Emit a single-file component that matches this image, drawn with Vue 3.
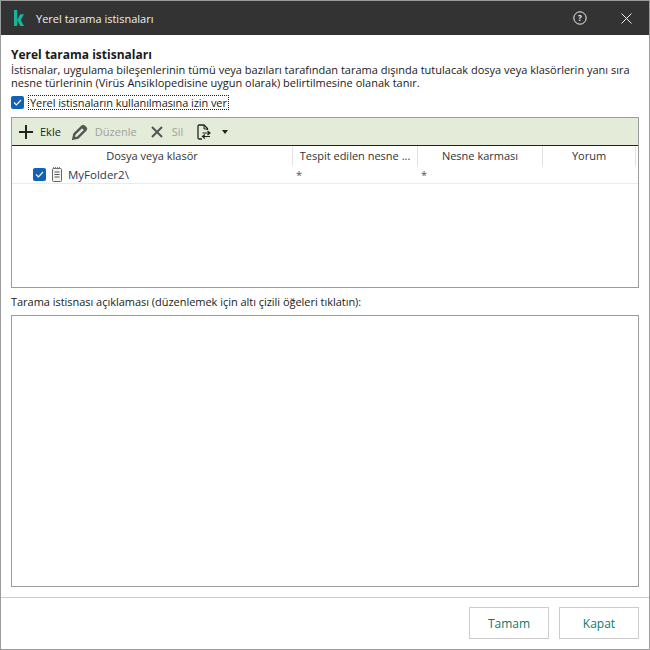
<template>
  <div class="window">
    <header class="titlebar">
      <svg class="logo" width="10" height="16" viewBox="0 0 10 16">
        <path d="M0 0h3.2v16H0zM6.2 4.2H10L6.8 10 10 16H6.2L3.2 10z" fill="#17b497" />
      </svg>
      <span class="title">Yerel tarama istisnaları</span>
      <svg class="help" width="14" height="14" viewBox="0 0 14 14">
        <circle cx="7" cy="7" r="6.2" fill="none" stroke="#eee" stroke-width="1" />
        <text x="7" y="10" text-anchor="middle" font-size="8" font-weight="700" fill="#eee" font-family="Open Sans, sans-serif">?</text>
      </svg>
      <svg class="close" width="11" height="11" viewBox="0 0 11 11">
        <path d="M.5.5l10 10M10.5.5l-10 10" stroke="#eee" stroke-width="1" fill="none" />
      </svg>
    </header>

    <main class="content">
      <h1>Yerel tarama istisnaları</h1>
      <p class="desc">İstisnalar, uygulama bileşenlerinin tümü veya bazıları tarafından tarama dışında tutulacak dosya veya klasörlerin yanı sıra nesne türlerinin (Virüs Ansiklopedisine uygun olarak) belirtilmesine olanak tanır.</p>
      <label class="allow">
        <span class="check"><svg width="9" height="7" viewBox="0 0 9 7"><path d="M1 3.5l2.4 2.4L8 1" fill="none" stroke="#fff" stroke-width="1.1" /></svg></span>
        <span class="allow-text">Yerel istisnaların kullanılmasına izin ver</span>
      </label>

      <section class="list">
        <div class="toolbar">
          <button class="tool add">
            <svg width="14" height="14" viewBox="0 0 14 14"><path d="M7 0v14M0 7h14" stroke="#222" stroke-width="2" fill="none" /></svg>
            <span>Ekle</span>
          </button>
          <button class="tool off edit">
            <svg width="16" height="16" viewBox="0 0 16 16">
              <path d="M1.4 14.6l1-4.4L10 2.6l3.4 3.4-7.6 7.6z" fill="none" stroke="#555" stroke-width="2.4" />
              <path d="M10.6 1.2a1.4 1.4 0 0 1 2 0l2.2 2.2a1.4 1.4 0 0 1 0 2l-1.2 1.2-4.2-4.2z" fill="#555" />
            </svg>
            <span>Düzenle</span>
          </button>
          <button class="tool off del">
            <svg width="12" height="12" viewBox="0 0 12 12"><path d="M1 1l10 10M11 1L1 11" stroke="#555" stroke-width="2" fill="none" /></svg>
            <span>Sil</span>
          </button>
          <button class="tool swap">
            <svg width="14" height="16" viewBox="0 0 14 16">
              <path d="M5 15H2.2a1.2 1.2 0 0 1-1.2-1.2V2.2A1.2 1.2 0 0 1 2.2 1H7l3.5 3.5V6" fill="none" stroke="#222" stroke-width="1.3" />
              <path d="M7 1v4h3.5" fill="none" stroke="#222" stroke-width="1" />
              <path d="M5.5 9h7.5M10.5 7l2.5 2-2.5 2M13 12.5H5.5M8 10.5l-2.5 2 2.5 2" fill="none" stroke="#222" stroke-width="1.2" />
            </svg>
          </button>
          <span class="caret"></span>
        </div>

        <div class="thead">
          <div v-for="col in columns" :key="col" class="th">{{ col }}</div>
        </div>
        <div class="row">
          <div class="cell first">
            <span class="check small"><svg width="9" height="7" viewBox="0 0 9 7"><path d="M1 3.5l2.4 2.4L8 1" fill="none" stroke="#fff" stroke-width="1.1" /></svg></span>
            <svg class="file" width="12" height="15" viewBox="0 0 12 15">
              <rect x="1.5" y="1.5" width="9" height="13" rx="1" fill="#f4f4ee" stroke="#666" />
              <path d="M2 1h8" stroke="#8a7a40" stroke-width="2" stroke-dasharray="1 1" />
              <path d="M3.5 5h5M3.5 7.5h5M3.5 10h5" stroke="#555" />
            </svg>
            <span>MyFolder2\</span>
          </div>
          <div class="cell star">*</div>
          <div class="cell star">*</div>
          <div class="cell"></div>
        </div>
      </section>

      <p class="label">Tarama istisnası açıklaması (düzenlemek için altı çizili öğeleri tıklatın):</p>
      <div class="details"></div>
    </main>

    <footer class="footer">
      <button class="btn">Tamam</button>
      <button class="btn">Kapat</button>
    </footer>
  </div>
</template>

<script setup>
const columns = ['Dosya veya klasör', 'Tespit edilen nesne ...', 'Nesne karması', 'Yorum']
</script>

<style>
html, body { margin: 0; }
</style>

<style scoped>
.window {
  box-sizing: border-box;
  width: 650px;
  height: 650px;
  border: 1px solid #9b9b9b;
  display: flex;
  flex-direction: column;
  background: #fff;
  color: #1a1a1a;
  font-family: "Open Sans", "Noto Sans", sans-serif;
  font-size: 11px;
}

.titlebar {
  height: 34px;
  flex-shrink: 0;
  background: #333;
  color: #f0f0f0;
  display: flex;
  align-items: center;
  padding: 0 17px 0 13px;
}
.logo { margin-right: 12px; }
.title { font-size: 11px; flex: 1; }
.help { margin-right: 34px; }

.content {
  flex: 1;
  display: flex;
  flex-direction: column;
  padding: 11px 10px 10px;
  min-height: 0;
}
h1 {
  margin: 0;
  font-size: 12px;
  line-height: 17px;
  font-weight: 700;
}
.desc {
  margin: 0;
  line-height: 13px;
  width: 625px;
}
.allow {
  display: flex;
  align-items: center;
  gap: 5px;
  height: 16px;
  margin-top: 5px;
}
.check {
  width: 13px;
  height: 13px;
  border-radius: 2px;
  background: #0f62b8;
  display: inline-flex;
  align-items: center;
  justify-content: center;
  flex-shrink: 0;
}
.allow-text {
  outline: 1px dotted #222;
  line-height: 13px;
  padding: 0 1px;
  letter-spacing: -0.08px;
}

.list {
  margin-top: 7px;
  height: 171px;
  flex-shrink: 0;
  box-sizing: border-box;
  border: 1px solid #9b9b9b;
}
.toolbar {
  height: 28px;
  box-sizing: border-box;
  background: #e4ecd9;
  border-bottom: 1px solid #222;
  display: flex;
  align-items: center;
  padding-left: 7px;
}
.tool {
  display: flex;
  align-items: center;
  gap: 7px;
  border: none;
  background: none;
  padding: 0;
  font: inherit;
  color: #222;
}
.tool.off { color: #a0a0a0; }
.tool.add { margin-right: 11px; }
.tool.edit { margin-right: 14px; }
.tool.del { margin-right: 14px; gap: 9px; }
.tool.swap { margin-right: 11px; }
.caret {
  width: 0;
  height: 0;
  border: 3.5px solid transparent;
  border-top: 4px solid #222;
  border-bottom: none;
}

.thead, .row {
  display: grid;
  grid-template-columns: 281px 125px 125px 93px;
}
.thead { height: 20px; }
.th {
  text-align: center;
  line-height: 20px;
  border-right: 1px solid #e3e3e3;
  white-space: nowrap;
  color: #333;
}
.row {
  height: 17px;
  border-bottom: 1px solid #ebebeb;
}
.cell {
  display: flex;
  align-items: center;
}
.first {
  padding-left: 21px;
  gap: 5px;
  font-size: 11.5px;
  color: #2b3a55;
}
.first span:last-child { margin-top: -1px; }
.star { padding: 0 0 1px 3px; color: #555; }

.label {
  margin: 7px 0 0;
  line-height: 14px;
  letter-spacing: -0.03px;
}
.details {
  flex: 1;
  margin-top: 6px;
  border: 1px solid #9b9b9b;
}

.footer {
  height: 52px;
  flex-shrink: 0;
  box-sizing: border-box;
  border-top: 1px solid #ccc;
  display: flex;
  justify-content: flex-end;
  gap: 10px;
  padding: 9px 10px 0;
}
.btn {
  width: 80px;
  height: 32px;
  background: #fff;
  border: 1px solid #ccc;
  font: inherit;
  font-size: 12px;
  color: #0a7a70;
}
</style>
